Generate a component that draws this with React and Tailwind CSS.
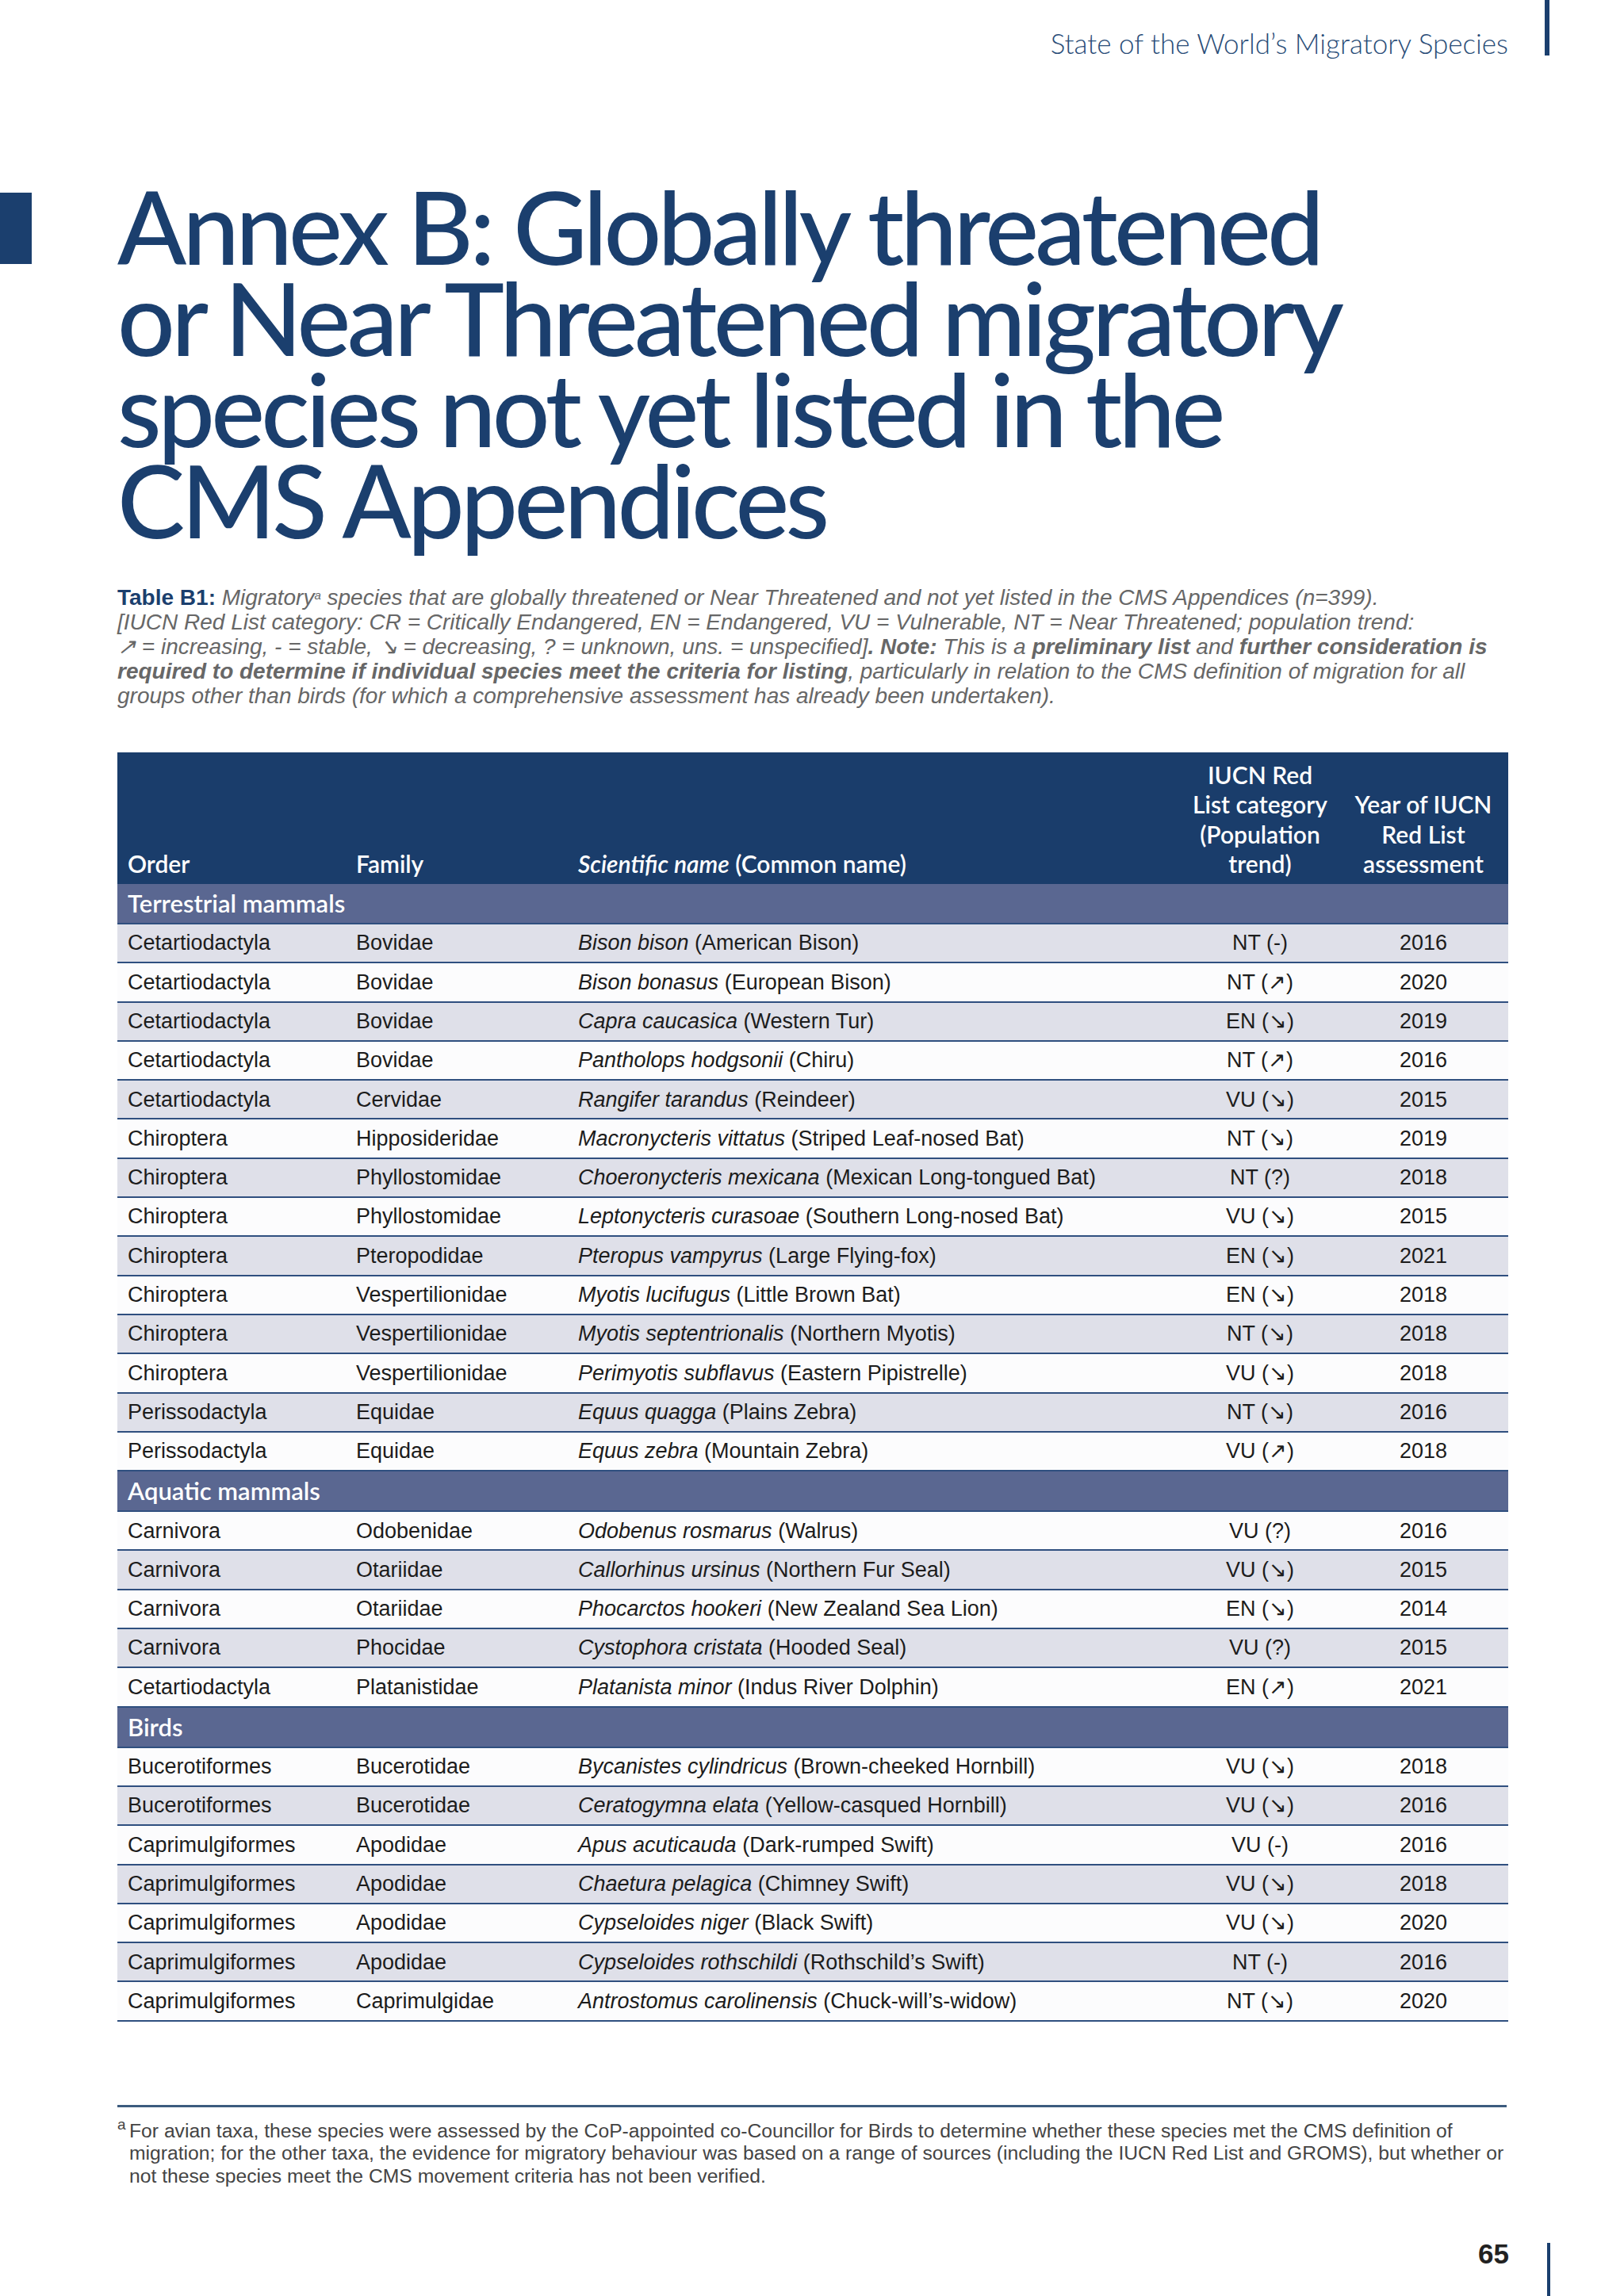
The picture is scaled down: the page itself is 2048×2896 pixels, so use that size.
import React from 'react';

const UP = '\u2197';
const DOWN = '\u2198';

const sections = [
    {
        name: 'Terrestrial mammals',
        rows: [
            ['Cetartiodactyla', 'Bovidae', 'Bison bison', 'American Bison', 'NT (-)', '2016'],
            ['Cetartiodactyla', 'Bovidae', 'Bison bonasus', 'European Bison', `NT (${UP})`, '2020'],
            ['Cetartiodactyla', 'Bovidae', 'Capra caucasica', 'Western Tur', `EN (${DOWN})`, '2019'],
            ['Cetartiodactyla', 'Bovidae', 'Pantholops hodgsonii', 'Chiru', `NT (${UP})`, '2016'],
            ['Cetartiodactyla', 'Cervidae', 'Rangifer tarandus', 'Reindeer', `VU (${DOWN})`, '2015'],
            ['Chiroptera', 'Hipposideridae', 'Macronycteris vittatus', 'Striped Leaf-nosed Bat', `NT (${DOWN})`, '2019'],
            ['Chiroptera', 'Phyllostomidae', 'Choeronycteris mexicana', 'Mexican Long-tongued Bat', 'NT (?)', '2018'],
            ['Chiroptera', 'Phyllostomidae', 'Leptonycteris curasoae', 'Southern Long-nosed Bat', `VU (${DOWN})`, '2015'],
            ['Chiroptera', 'Pteropodidae', 'Pteropus vampyrus', 'Large Flying-fox', `EN (${DOWN})`, '2021'],
            ['Chiroptera', 'Vespertilionidae', 'Myotis lucifugus', 'Little Brown Bat', `EN (${DOWN})`, '2018'],
            ['Chiroptera', 'Vespertilionidae', 'Myotis septentrionalis', 'Northern Myotis', `NT (${DOWN})`, '2018'],
            ['Chiroptera', 'Vespertilionidae', 'Perimyotis subflavus', 'Eastern Pipistrelle', `VU (${DOWN})`, '2018'],
            ['Perissodactyla', 'Equidae', 'Equus quagga', 'Plains Zebra', `NT (${DOWN})`, '2016'],
            ['Perissodactyla', 'Equidae', 'Equus zebra', 'Mountain Zebra', `VU (${UP})`, '2018'],
        ],
    },
    {
        name: 'Aquatic mammals',
        rows: [
            ['Carnivora', 'Odobenidae', 'Odobenus rosmarus', 'Walrus', 'VU (?)', '2016'],
            ['Carnivora', 'Otariidae', 'Callorhinus ursinus', 'Northern Fur Seal', `VU (${DOWN})`, '2015'],
            ['Carnivora', 'Otariidae', 'Phocarctos hookeri', 'New Zealand Sea Lion', `EN (${DOWN})`, '2014'],
            ['Carnivora', 'Phocidae', 'Cystophora cristata', 'Hooded Seal', 'VU (?)', '2015'],
            ['Cetartiodactyla', 'Platanistidae', 'Platanista minor', 'Indus River Dolphin', `EN (${UP})`, '2021'],
        ],
    },
    {
        name: 'Birds',
        rows: [
            ['Bucerotiformes', 'Bucerotidae', 'Bycanistes cylindricus', 'Brown-cheeked Hornbill', `VU (${DOWN})`, '2018'],
            ['Bucerotiformes', 'Bucerotidae', 'Ceratogymna elata', 'Yellow-casqued Hornbill', `VU (${DOWN})`, '2016'],
            ['Caprimulgiformes', 'Apodidae', 'Apus acuticauda', 'Dark-rumped Swift', 'VU (-)', '2016'],
            ['Caprimulgiformes', 'Apodidae', 'Chaetura pelagica', 'Chimney Swift', `VU (${DOWN})`, '2018'],
            ['Caprimulgiformes', 'Apodidae', 'Cypseloides niger', 'Black Swift', `VU (${DOWN})`, '2020'],
            ['Caprimulgiformes', 'Apodidae', 'Cypseloides rothschildi', 'Rothschild\u2019s Swift', 'NT (-)', '2016'],
            ['Caprimulgiformes', 'Caprimulgidae', 'Antrostomus carolinensis', 'Chuck-will\u2019s-widow', `NT (${DOWN})`, '2020'],
        ],
    },
];

const cols = 'grid grid-cols-[287px_280px_775px_198px_214px]';

const DataRow = ({ row, shaded }) => {
    const [order, family, sci, common, cat, year] = row;
    return (
        <div className={`${cols} h-[49.3px] items-center border-b-2 border-[#2f4f7f] ${shaded ? 'bg-[#dfe0e9]' : 'bg-[#fcfcfd]'} text-[27px] text-[#1c1c1c]`}>
            <div className="pl-[13px] whitespace-nowrap">{order}</div>
            <div className="pl-[14px] whitespace-nowrap">{family}</div>
            <div className="pl-[14px] whitespace-nowrap"><i>{sci}</i> ({common})</div>
            <div className="text-center whitespace-nowrap">{cat}</div>
            <div className="text-center">{year}</div>
        </div>
    );
};

const App = () => {
    let idx = 0;
    return (
        <div className="w-[2048px] h-[2896px] bg-white flex flex-col font-['Liberation_Sans',Arial,sans-serif]">
            {/* running header */}
            <div className="flex justify-end items-start pr-[94px] h-[70px]">
                <div className="mt-[37px] font-['Lato',sans-serif] font-light text-[35px] leading-[35px] text-[#2a4d78]">
                    State of the World’s Migratory Species
                </div>
                <div className="ml-[46px] w-[6px] h-[70px] bg-[#1b3f6e]"></div>
            </div>

            {/* title */}
            <div className="flex items-start mt-[157px]">
                <div className="w-[40px] h-[90px] mt-[16px] bg-[#1b3f6e]"></div>
                <h1 className="ml-[108px] font-['Lato',sans-serif] font-medium text-[128px] leading-[115px] tracking-[-4.7px] text-[#1b3f6e]">
                    Annex B: Globally threatened<br />
                    or Near Threatened migratory<br />
                    species not yet listed in the<br />
                    CMS Appendices
                </h1>
            </div>

            <div className="px-[148px]">
                {/* caption */}
                <p className="mt-[51px] text-[28px] leading-[31px] italic text-[#676767] whitespace-nowrap">
                    <b className="not-italic text-[#1b3f6e]">Table B1:</b> Migratory<sup className="text-[15px]">a</sup> species that are globally threatened or Near Threatened and not yet listed in the CMS Appendices (n=399).<br />
                    [IUCN Red List category: CR = Critically Endangered, EN = Endangered, VU = Vulnerable, NT = Near Threatened; population trend:<br />
                    {UP} = increasing, - = stable, {DOWN} = decreasing, ? = unknown, uns. = unspecified]<b>. Note:</b> This is a <b>preliminary list</b> and <b>further consideration is</b><br />
                    <b>required to determine if individual species meet the criteria for listing</b>, particularly in relation to the CMS definition of migration for all<br />
                    groups other than birds (for which a comprehensive assessment has already been undertaken).
                </p>

                {/* table */}
                <div className="mt-[56px] w-[1754px]">
                    <div className={`${cols} h-[166px] items-end pb-[6px] bg-[#1a3d6b] text-white font-['Lato',sans-serif] font-semibold text-[30px] leading-[37.6px]`}>
                        <div className="pl-[13px]">Order</div>
                        <div className="pl-[14px]">Family</div>
                        <div className="pl-[14px]"><i>Scientific name</i> (Common name)</div>
                        <div className="text-center">IUCN Red<br />List category<br />(Population<br />trend)</div>
                        <div className="text-center">Year of IUCN<br />Red List<br />assessment</div>
                    </div>
                    {sections.map((section) => {
                        idx += 1;
                        return (
                            <React.Fragment key={section.name}>
                                <div className="h-[51px] flex items-center pl-[13px] bg-[#5a6791] border-b-2 border-[#2f4f7f] text-white font-['Lato',sans-serif] font-semibold text-[31px]">
                                    {section.name}
                                </div>
                                {section.rows.map((row) => {
                                    const shaded = idx % 2 === 1;
                                    idx += 1;
                                    return <DataRow key={row[2]} row={row} shaded={shaded} />;
                                })}
                            </React.Fragment>
                        );
                    })}
                </div>

                {/* footnote */}
                <div className="mt-[105px] h-[3px] bg-[#3c5b7e]"></div>
                <div className="mt-[16px] flex text-[24.7px] leading-[28.6px] text-[#444]">
                    <span className="w-[15px] shrink-0 text-[19px] leading-[19px] -mt-[4px]">a</span>
                    <p className="whitespace-nowrap">
                        For avian taxa, these species were assessed by the CoP-appointed co-Councillor for Birds to determine whether these species met the CMS definition of<br />
                        migration; for the other taxa, the evidence for migratory behaviour was based on a range of sources (including the IUCN Red List and GROMS), but whether or<br />
                        not these species meet the CMS movement criteria has not been verified.
                    </p>
                </div>
            </div>

            {/* page number */}
            <div className="mt-auto flex justify-end items-start pr-[93px] h-[67px]">
                <div className="-mt-[4px] font-bold text-[35px] leading-[35px] text-[#222]">65</div>
                <div className="ml-[48px] w-[4px] h-[67px] bg-[#1b3f6e]"></div>
            </div>
        </div>
    );
};

export default App;
